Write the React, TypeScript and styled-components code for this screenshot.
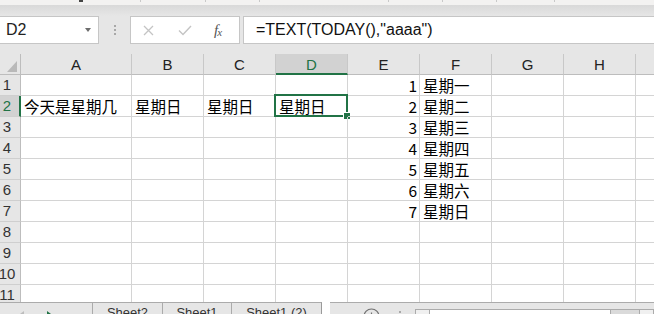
import React from 'react';
import styled, { createGlobalStyle } from 'styled-components';

const UI = `'Liberation Sans', 'Noto Sans', Arial, sans-serif`;
const CJK = `'Noto Sans CJK SC', 'Noto Sans', sans-serif`;
const GREEN = '#217346';

const GlobalStyle = createGlobalStyle`
  html, body { margin: 0; padding: 0; background: #fff; }
  body { width: 654px; height: 314px; overflow: hidden; }
`;

const Window = styled.div`
  width: 654px;
  height: 314px;
  overflow: hidden;
  display: flex;
  flex-direction: column;
  background: #e6e6e6;
  font-family: ${UI};
`;

/* ribbon edge peeking in at the very top */
const RibbonEdge = styled.div`
  flex: none;
  height: 5px;
  background: #f3f2f1;
  display: flex;
  align-items: flex-start;
`;

const RibbonMark = styled.div`
  margin-left: 79px;
  width: 4px;
  height: 2px;
  background: #444;
`;

const RibbonTick = styled.div<{ $w: number }>`
  flex: none;
  width: ${p => p.$w}px;
  height: 2px;
  box-sizing: border-box;
  border-right: 1px solid #c9c9c9;
`;

/* formula bar */
const FormulaArea = styled.div`
  flex: none;
  height: 49px;
  box-sizing: border-box;
  padding: 11px 0 10px;
  background: linear-gradient(#d9d9d9, #e6e6e6 11px);
  display: flex;
`;

const NameBox = styled.div`
  width: 100px;
  margin-left: -1px;
  box-sizing: border-box;
  background: #fff;
  border: 1px solid #c6c6c6;
  display: flex;
  align-items: center;
  justify-content: space-between;
  padding: 0 7px 0 6px;
  font-size: 16px;
  color: #222;
`;

const DropArrow = styled.span`
  width: 0;
  height: 0;
  border-left: 3.5px solid transparent;
  border-right: 3.5px solid transparent;
  border-top: 4px solid #6d6d6d;
`;

const Grip = styled.div`
  display: flex;
  flex-direction: column;
  justify-content: center;
  gap: 2px;
  margin: 0 14px 0 15px;
`;

const GripDot = styled.span`
  width: 2px;
  height: 2px;
  background: #a8a8a8;
`;

const FxBox = styled.div`
  width: 110px;
  box-sizing: border-box;
  background: #fff;
  border: 1px solid #c6c6c6;
  display: flex;
  align-items: center;
  padding-left: 12px;
`;

const FxButton = styled.span<{ $gap: number }>`
  display: flex;
  margin-left: ${p => p.$gap}px;
`;

const FxLabel = styled.span`
  margin-left: 22px;
  font-family: 'Liberation Serif', serif;
  font-style: italic;
  font-size: 15px;
  color: #555;
  letter-spacing: -1px;

  sub {
    font-size: 11px;
    vertical-align: -1px;
  }
`;

const FormulaInput = styled.div`
  flex: 1;
  margin: 0 -1px 0 3px;
  background: #fff;
  border: 1px solid #c6c6c6;
  display: flex;
  align-items: center;
  padding-left: 12px;
  font-size: 16px;
  color: #111;
  white-space: nowrap;
`;

/* grid */
const Sheet = styled.div`
  flex: none;
  height: 248px;
  overflow: hidden;
  background: #fff;
`;

const Grid = styled.div`
  margin-left: -5px;
  display: grid;
  grid-template-columns: 26px 111px repeat(8, 72px);
  grid-auto-rows: 21px;
`;

const Corner = styled.div`
  background: #e6e6e6;
  box-sizing: border-box;
  border-right: 1px solid #bdbdbd;
  border-bottom: 1px solid #bdbdbd;
  display: flex;
  align-items: flex-end;
  justify-content: flex-end;
  padding: 0 3px 2px 0;
`;

const CornerTriangle = styled.span`
  width: 0;
  height: 0;
  border-left: 10px solid transparent;
  border-bottom: 11px solid #b9b9b9;
`;

const ColHead = styled.div<{ $active?: boolean }>`
  box-sizing: border-box;
  background: ${p => (p.$active ? '#d2d2d2' : '#e6e6e6')};
  border-right: 1px solid #c8c8c8;
  border-bottom: ${p => (p.$active ? `2px solid ${GREEN}` : '1px solid #bdbdbd')};
  text-align: center;
  font-size: 15px;
  line-height: 21px;
  color: ${p => (p.$active ? GREEN : '#222')};
`;

const RowHead = styled.div<{ $active?: boolean }>`
  box-sizing: border-box;
  background: ${p => (p.$active ? '#d2d2d2' : '#e6e6e6')};
  border-right: ${p => (p.$active ? `2px solid ${GREEN}` : '1px solid #bdbdbd')};
  border-bottom: 1px solid #cfcfcf;
  text-align: center;
  padding-right: ${p => (p.$active ? 0 : 1)}px;
  font-size: 15px;
  line-height: 20px;
  color: ${p => (p.$active ? GREEN : '#333')};
`;

const Cell = styled.div<{ $right?: boolean }>`
  position: relative;
  box-sizing: border-box;
  border-right: 1px solid #d4d4d4;
  border-bottom: 1px solid #d4d4d4;
  padding: 0 2px 0 3px;
  font-family: ${CJK};
  font-size: 15.5px;
  line-height: 20px;
  color: #000;
  white-space: nowrap;
  text-align: ${p => (p.$right ? 'right' : 'left')};
`;

const Selection = styled.span`
  position: absolute;
  left: -2px;
  top: -2px;
  right: -1px;
  bottom: -1px;
  border: 2px solid ${GREEN};
  pointer-events: none;
`;

const FillHandle = styled.span`
  position: absolute;
  right: -4px;
  bottom: -4px;
  width: 6px;
  height: 6px;
  background: ${GREEN};
  border-left: 1px solid #fff;
  border-top: 1px solid #fff;
`;

/* sheet tab bar */
const TabBar = styled.div`
  flex: none;
  height: 24px;
  display: flex;
`;

const TabStrip = styled.div`
  width: 322px;
  box-sizing: border-box;
  background: #e6e6e6;
  border-top: 1px solid #ababab;
  border-right: 1px solid #9a9a9a;
  display: flex;
`;

const NavArea = styled.div`
  width: 92px;
  display: flex;
  align-items: flex-start;
  padding-top: 8px;
  box-sizing: border-box;
`;

const NavArrow = styled.span<{ $dir: 'left' | 'right'; $on?: boolean; $x: number }>`
  margin-left: ${p => p.$x}px;
  width: 0;
  height: 0;
  border-top: 3px solid transparent;
  border-bottom: 3px solid transparent;
  ${p =>
    p.$dir === 'left'
      ? `border-right: 4px solid ${p.$on ? GREEN : '#bdbdbd'};`
      : `border-left: 4px solid ${p.$on ? GREEN : '#bdbdbd'};`}
`;

const Tab = styled.div<{ $w: number }>`
  width: ${p => p.$w}px;
  box-sizing: border-box;
  border-left: 1px solid #ababab;
  text-align: center;
  font-size: 13px;
  line-height: 20px;
  color: #333;
  white-space: nowrap;
`;

const TabGap = styled.div`
  width: 15px;
  background: #fff;
`;

const ScrollStrip = styled.div`
  flex: 1;
  background: #e6e6e6;
  border-top: 1px solid #ababab;
  display: flex;
  align-items: flex-start;
  padding-left: 33px;
`;

const AddSheet = styled.span`
  display: flex;
  margin-top: 5px;
`;

const SplitGrip = styled(Grip)`
  justify-content: flex-start;
  margin: 8px 14px 0 19px;
`;

const ScrollButton = styled.div`
  width: 15px;
  height: 16px;
  margin-top: 6px;
  box-sizing: border-box;
  border: 1px solid #ababab;
  background: #f0f0f0;
  display: flex;
  justify-content: center;
  padding-top: 4px;
`;

const ScrollThumb = styled.div`
  width: 181px;
  height: 16px;
  margin-top: 6px;
  box-sizing: border-box;
  border: 1px solid #ababab;
  border-left: none;
  background: #fff;
`;

const ScrollTrack = styled.div`
  width: 28px;
  height: 16px;
  margin-top: 6px;
  background: #dadada;
  border-top: 1px solid #ababab;
  box-sizing: border-box;
`;

const columns = ['A', 'B', 'C', 'D', 'E', 'F', 'G', 'H', 'I'];
const weekdays = ['星期一', '星期二', '星期三', '星期四', '星期五', '星期六', '星期日'];
const rowTwo: Record<string, string> = { A: '今天是星期几', B: '星期日', C: '星期日', D: '星期日' };

const cellValue = (row: number, col: string) => {
  if (row === 2 && rowTwo[col]) return rowTwo[col];
  if (row <= 7 && col === 'E') return String(row);
  if (row <= 7 && col === 'F') return weekdays[row - 1];
  return '';
};

const ribbonTicks = [58, 65, 54, 129, 54, 54, 58];

export default function App() {
  const rows = Array.from({ length: 12 }, (_, i) => i + 1);
  return (
    <Window>
      <GlobalStyle />
      <RibbonEdge>
        <RibbonMark />
        {ribbonTicks.map((w, i) => (
          <RibbonTick key={i} $w={w} />
        ))}
      </RibbonEdge>

      <FormulaArea>
        <NameBox>
          D2
          <DropArrow />
        </NameBox>
        <Grip>
          <GripDot />
          <GripDot />
          <GripDot />
        </Grip>
        <FxBox>
          <FxButton $gap={0}>
            <svg width="11" height="11" viewBox="0 0 11 11">
              <path d="M1 1L10 10M10 1L1 10" stroke="#c4c4c4" strokeWidth="1.3" fill="none" />
            </svg>
          </FxButton>
          <FxButton $gap={24}>
            <svg width="14" height="11" viewBox="0 0 14 11">
              <path d="M1 5.5L5 9.5L13 1" stroke="#c4c4c4" strokeWidth="1.4" fill="none" />
            </svg>
          </FxButton>
          <FxLabel>
            f<sub>x</sub>
          </FxLabel>
        </FxBox>
        <FormulaInput>=TEXT(TODAY(),"aaaa")</FormulaInput>
      </FormulaArea>

      <Sheet>
        <Grid>
          <Corner>
            <CornerTriangle />
          </Corner>
          {columns.map(c => (
            <ColHead key={c} $active={c === 'D'}>
              {c}
            </ColHead>
          ))}
          {rows.map(r => (
            <React.Fragment key={r}>
              <RowHead $active={r === 2}>{r}</RowHead>
              {columns.map(c => (
                <Cell key={c} $right={c === 'E'}>
                  {cellValue(r, c)}
                  {r === 2 && c === 'D' && (
                    <Selection>
                      <FillHandle />
                    </Selection>
                  )}
                </Cell>
              ))}
            </React.Fragment>
          ))}
        </Grid>
      </Sheet>

      <TabBar>
        <TabStrip>
          <NavArea>
            <NavArrow $dir="left" $x={20} />
            <NavArrow $dir="right" $x={23} $on />
          </NavArea>
          <Tab $w={70}>Sheet2</Tab>
          <Tab $w={69}>Sheet1</Tab>
          <Tab $w={90}>Sheet1 (2)</Tab>
        </TabStrip>
        <TabGap />
        <ScrollStrip>
          <AddSheet>
            <svg width="17" height="17" viewBox="0 0 17 17">
              <circle cx="8.5" cy="8.5" r="7.5" stroke="#707070" strokeWidth="1.2" fill="none" />
              <path d="M8.5 4.5V12.5M4.5 8.5H12.5" stroke="#707070" strokeWidth="1.2" />
            </svg>
          </AddSheet>
          <SplitGrip>
            <GripDot />
            <GripDot />
          </SplitGrip>
          <ScrollButton>
            <NavArrow $dir="left" $x={0} />
          </ScrollButton>
          <ScrollThumb />
          <ScrollTrack />
          <ScrollButton />
        </ScrollStrip>
      </TabBar>
    </Window>
  );
}
